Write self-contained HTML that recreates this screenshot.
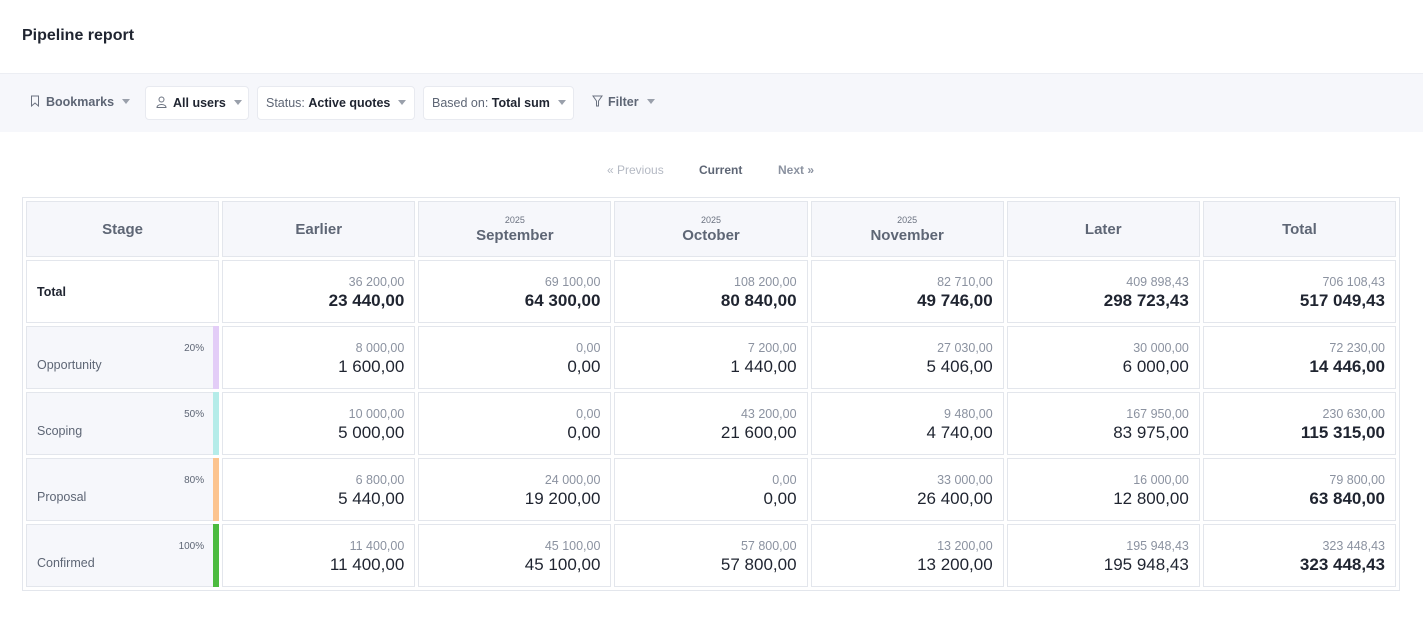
<!DOCTYPE html>
<html><head><meta charset="utf-8"><style>
body{margin:0;background:#fff;font-family:"Liberation Sans",sans-serif;color:#1f2430;width:1423px;height:644px;overflow:hidden}
h1{position:absolute;left:22px;top:27px;margin:0;font-size:16px;font-weight:bold}
.bar{position:absolute;left:0;top:73px;width:1423px;height:58px;background:#f6f7fb;border-top:1px solid #eceef3}
.btn{position:absolute;top:12px;height:32px;line-height:32px;font-size:12.5px;color:#5e6675;border-radius:4px}
.btn.w{background:#fff;border:1px solid #e8eaf0}
.btn b{color:#1f2430}
.car{display:inline-block;width:0;height:0;border-left:4px solid transparent;border-right:4px solid transparent;border-top:5px solid #9aa0ab;margin-left:8px;vertical-align:2px}
.nav{position:absolute;top:163px;font-size:12px;color:#b4b9c3}
table{position:absolute;left:22px;top:197px;width:1378px;border:1px solid #e3e6ec;border-collapse:separate;border-spacing:3px;table-layout:fixed}
td,th{border:1px solid #e3e6ec;padding:0 10px;box-sizing:border-box}
th{height:56px;background:#f6f7fb;color:#5e6675;font-size:15px;font-weight:bold}
th small{display:block;font-size:9px;font-weight:normal;color:#6b7280;margin-bottom:2px}
td{height:63px;text-align:right;vertical-align:middle}
td .s{font-size:12.5px;color:#8b92a0;margin-top:2px}
td .b{font-size:17px;color:#1f2430;margin-top:2px}
tr.t td .b,td.tot .b{font-weight:bold}
td.st{background:#f6f7fb;text-align:left;position:relative;color:#5e6675;font-size:12.5px}
td.st .p{position:absolute;right:14px;top:16px;font-size:10px;color:#5e6675}
td.st .l{position:absolute;left:10px;top:31px}
td.st .c{position:absolute;right:-1px;top:-1px;bottom:-1px;width:6px}
</style></head><body>
<h1>Pipeline report</h1>
<div class="bar">
<div class="btn" style="left:30px"><svg width="10" height="12" viewBox="0 0 10 12" style="vertical-align:-1px;margin-right:6px"><path d="M1.5 1h7v10L5 8 1.5 11z" fill="none" stroke="#6b7280"/></svg><b style="color:#5e6675">Bookmarks</b><span class="car"></span></div>
<div class="btn w" style="left:145px;width:102px"><span style="padding-left:10px"><svg width="11" height="12" viewBox="0 0 11 12" style="vertical-align:-1px;margin-right:6px"><circle cx="5.5" cy="3.5" r="2.5" fill="none" stroke="#6b7280"/><path d="M1 11.5c0-4 9-4 9 0z" fill="none" stroke="#6b7280"/></svg><b>All users</b><span class="car"></span></span></div>
<div class="btn w" style="left:257px;width:156px"><span style="padding-left:8px">Status: <b>Active quotes</b><span class="car"></span></span></div>
<div class="btn w" style="left:423px;width:149px"><span style="padding-left:8px">Based on: <b>Total sum</b><span class="car"></span></span></div>
<div class="btn" style="left:592px"><svg width="11" height="12" viewBox="0 0 11 12" style="vertical-align:-1px;margin-right:5px"><path d="M1 1h9L6.5 6v5h-2V6z" fill="none" stroke="#6b7280"/></svg><b style="color:#5e6675">Filter</b><span class="car"></span></div>
</div>
<div class="nav" style="left:607px">« Previous</div>
<div class="nav" style="left:699px;color:#5e6675;font-weight:bold">Current</div>
<div class="nav" style="left:778px;color:#8b92a0;font-weight:bold">Next »</div>
<table>
<tr><th>Stage</th><th>Earlier</th><th><small>2025</small>September</th><th><small>2025</small>October</th><th><small>2025</small>November</th><th>Later</th><th>Total</th></tr>
<tr class="t"><td style="text-align:left;font-weight:bold;font-size:12.5px">Total</td>
<td><div class="s">36 200,00</div><div class="b">23 440,00</div></td>
<td><div class="s">69 100,00</div><div class="b">64 300,00</div></td>
<td><div class="s">108 200,00</div><div class="b">80 840,00</div></td>
<td><div class="s">82 710,00</div><div class="b">49 746,00</div></td>
<td><div class="s">409 898,43</div><div class="b">298 723,43</div></td>
<td><div class="s">706 108,43</div><div class="b">517 049,43</div></td></tr>
<tr><td class="st"><span class="p">20%</span><span class="l">Opportunity</span><span class="c" style="background:#e3cdf7"></span></td>
<td><div class="s">8 000,00</div><div class="b">1 600,00</div></td>
<td><div class="s">0,00</div><div class="b">0,00</div></td>
<td><div class="s">7 200,00</div><div class="b">1 440,00</div></td>
<td><div class="s">27 030,00</div><div class="b">5 406,00</div></td>
<td><div class="s">30 000,00</div><div class="b">6 000,00</div></td>
<td class="tot"><div class="s">72 230,00</div><div class="b">14 446,00</div></td></tr>
<tr><td class="st"><span class="p">50%</span><span class="l">Scoping</span><span class="c" style="background:#b5ece9"></span></td>
<td><div class="s">10 000,00</div><div class="b">5 000,00</div></td>
<td><div class="s">0,00</div><div class="b">0,00</div></td>
<td><div class="s">43 200,00</div><div class="b">21 600,00</div></td>
<td><div class="s">9 480,00</div><div class="b">4 740,00</div></td>
<td><div class="s">167 950,00</div><div class="b">83 975,00</div></td>
<td class="tot"><div class="s">230 630,00</div><div class="b">115 315,00</div></td></tr>
<tr><td class="st"><span class="p">80%</span><span class="l">Proposal</span><span class="c" style="background:#fcc48f"></span></td>
<td><div class="s">6 800,00</div><div class="b">5 440,00</div></td>
<td><div class="s">24 000,00</div><div class="b">19 200,00</div></td>
<td><div class="s">0,00</div><div class="b">0,00</div></td>
<td><div class="s">33 000,00</div><div class="b">26 400,00</div></td>
<td><div class="s">16 000,00</div><div class="b">12 800,00</div></td>
<td class="tot"><div class="s">79 800,00</div><div class="b">63 840,00</div></td></tr>
<tr><td class="st"><span class="p">100%</span><span class="l">Confirmed</span><span class="c" style="background:#4cbb3f"></span></td>
<td><div class="s">11 400,00</div><div class="b">11 400,00</div></td>
<td><div class="s">45 100,00</div><div class="b">45 100,00</div></td>
<td><div class="s">57 800,00</div><div class="b">57 800,00</div></td>
<td><div class="s">13 200,00</div><div class="b">13 200,00</div></td>
<td><div class="s">195 948,43</div><div class="b">195 948,43</div></td>
<td class="tot"><div class="s">323 448,43</div><div class="b">323 448,43</div></td></tr>
</table>
</body></html>
